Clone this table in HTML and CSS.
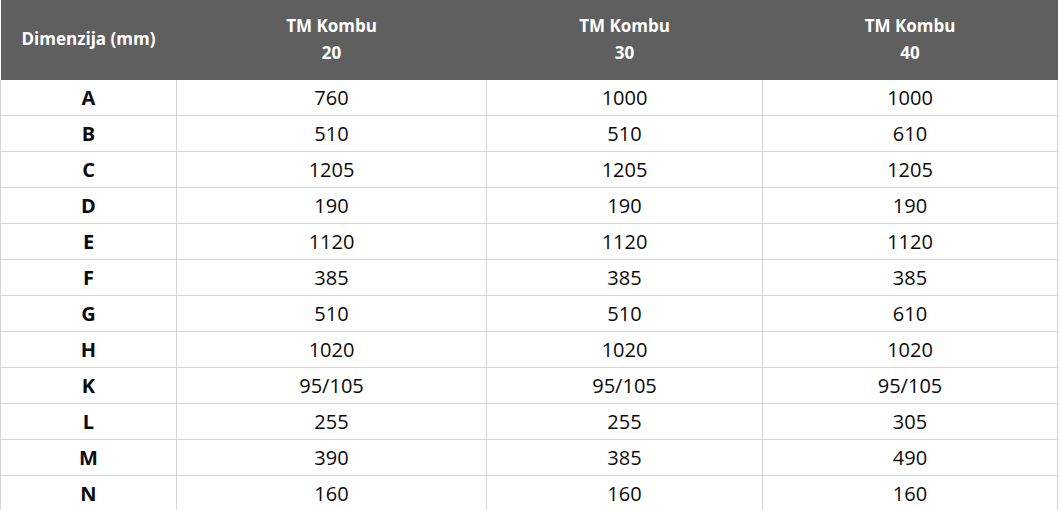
FILE: index.html
```html
<!DOCTYPE html>
<html>
<head>
<meta charset="utf-8">
<link rel="stylesheet" href="styles.css">
</head>
<body>
<table class="dims">
  <colgroup>
    <col class="c1"><col class="c2"><col class="c3"><col class="c4">
  </colgroup>
  <thead>
    <tr>
      <th>Dimenzija (mm)</th>
      <th>TM Kombu<br>20</th>
      <th>TM Kombu<br>30</th>
      <th>TM Kombu<br>40</th>
    </tr>
  </thead>
  <tbody>
    <tr><td class="key">A</td><td>760</td><td>1000</td><td>1000</td></tr>
    <tr><td class="key">B</td><td>510</td><td>510</td><td>610</td></tr>
    <tr><td class="key">C</td><td>1205</td><td>1205</td><td>1205</td></tr>
    <tr><td class="key">D</td><td>190</td><td>190</td><td>190</td></tr>
    <tr><td class="key">E</td><td>1120</td><td>1120</td><td>1120</td></tr>
    <tr><td class="key">F</td><td>385</td><td>385</td><td>385</td></tr>
    <tr><td class="key">G</td><td>510</td><td>510</td><td>610</td></tr>
    <tr><td class="key">H</td><td>1020</td><td>1020</td><td>1020</td></tr>
    <tr><td class="key">K</td><td>95/105</td><td>95/105</td><td>95/105</td></tr>
    <tr><td class="key">L</td><td>255</td><td>255</td><td>305</td></tr>
    <tr><td class="key">M</td><td>390</td><td>385</td><td>490</td></tr>
    <tr><td class="key">N</td><td>160</td><td>160</td><td>160</td></tr>
  </tbody>
</table>
</body>
</html>
```
FILE: styles.css
```css
html, body {
  margin: 0;
  padding: 0;
  background: #ffffff;
}
body {
  font-family: "Open Sans", "Liberation Sans", sans-serif;
  color: #0a0a0a;
}
.dims {
  border-collapse: collapse;
  width: 1057px;
  table-layout: fixed;
}
.c1 { width: 176px; }
.c2 { width: 310px; }
.c3 { width: 276px; }
.c4 { width: 295px; }
.dims th {
  background: #5f5f5f;
  color: #ffffff;
  font-weight: 700;
  font-size: 17px;
  line-height: 27px;
  height: 77px;
  padding: 0 0 3px;
  text-align: center;
  vertical-align: middle;
  border: 0;
}
.dims td {
  height: 35px;
  padding: 0;
  text-align: center;
  vertical-align: middle;
  font-size: 20px;
  line-height: 35px;
  border: 1px solid #d4d4d4;
}
.dims tbody tr:first-child td {
  border-top: 0;
}
.dims td.key {
  font-weight: 700;
}
```
